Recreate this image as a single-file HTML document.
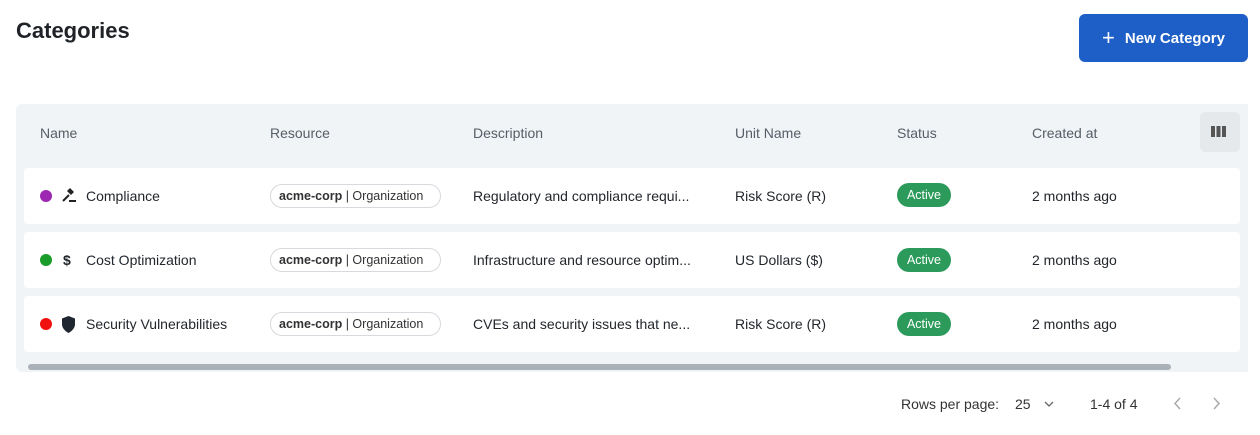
<!DOCTYPE html>
<html><head><style>
*{box-sizing:border-box;margin:0;padding:0}
body{width:1260px;height:435px;background:#fff;font-family:"Liberation Sans",sans-serif;color:#1f2328;position:relative;overflow:hidden}
.abs{position:absolute}
h1{position:absolute;left:16px;top:18px;font-size:22px;font-weight:bold;color:#1f2328}
.btn{left:1079px;top:14px;width:169px;height:48px;background:#1e5fc7;border-radius:6px;color:#fff;font-weight:bold;font-size:15px;display:flex;align-items:center;justify-content:center;gap:10px}
.wrap{left:16px;top:104px;width:1232px;height:268px;background:#f1f4f7;border-radius:6px 0 0 6px}
.th{top:125px;font-size:14px;color:#555d66}
.row{left:24px;width:1216px;height:56px;background:#fff;border-radius:4px}
.t{font-size:14px;color:#22272d}
.dot{width:12px;height:12px;border-radius:50%}
.chip{height:24px;border:1px solid #d6d9dd;border-radius:12px;font-size:12.5px;padding:0 8px;line-height:22px;color:#333;left:270px;width:171px}
.badge{left:897px;width:54px;height:24px;border-radius:12px;background:#2c9a5a;color:#fff;font-size:12.5px;text-align:center;line-height:24px}
.pg{font-size:14px;color:#333;top:396px}
</style></head><body>
<h1>Categories</h1>
<div class="abs btn"><span style="font-size:22px;font-weight:normal;line-height:1">+</span>New Category</div>
<div class="abs wrap"></div>
<div class="abs th" style="left:40px">Name</div>
<div class="abs th" style="left:270px">Resource</div>
<div class="abs th" style="left:473px">Description</div>
<div class="abs th" style="left:735px">Unit Name</div>
<div class="abs th" style="left:897px">Status</div>
<div class="abs th" style="left:1032px">Created at</div>
<div class="abs" style="left:1200px;top:112px;width:40px;height:40px;background:#e6e9ec;border-radius:6px"></div>
<svg class="abs" style="left:1211px;top:126px" width="15" height="11"><rect x="0" y="0" width="4" height="11" fill="#555"/><rect x="5.5" y="0" width="4" height="11" fill="#555"/><rect x="11" y="0" width="4" height="11" fill="#555"/></svg>

<div class="abs row" style="top:168px"></div>
<div class="abs row" style="top:232px"></div>
<div class="abs row" style="top:296px"></div>

<div class="abs dot" style="left:40px;top:190px;background:#9c27b0"></div>
<svg class="abs" style="left:61px;top:187px" width="16" height="16" viewBox="0 0 16 16"><path d="M2 14 L8 8" stroke="#222" stroke-width="2"/><path d="M6 4 L9 1 L13 5 L10 8 Z" fill="#222"/><rect x="8" y="13" width="7" height="2" fill="#222"/></svg>
<div class="abs t" style="left:86px;top:188px">Compliance</div>

<div class="abs dot" style="left:40px;top:254px;background:#1a9c2a"></div>
<div class="abs t" style="left:63px;top:252px;font-weight:bold">$</div>
<div class="abs t" style="left:86px;top:252px">Cost Optimization</div>

<div class="abs dot" style="left:40px;top:318px;background:#f01010"></div>
<svg class="abs" style="left:61px;top:316px" width="15" height="17" viewBox="0 0 15 17"><path d="M7.5 0 L14 2.5 V8 C14 12 11 15 7.5 17 C4 15 1 12 1 8 V2.5 Z" fill="#1f2630"/></svg>
<div class="abs t" style="left:86px;top:316px">Security Vulnerabilities</div>

<div class="abs chip" style="top:184px"><b>acme-corp</b> | Organization</div>
<div class="abs chip" style="top:248px"><b>acme-corp</b> | Organization</div>
<div class="abs chip" style="top:312px"><b>acme-corp</b> | Organization</div>

<div class="abs t" style="left:473px;top:188px">Regulatory and compliance requi...</div>
<div class="abs t" style="left:473px;top:252px">Infrastructure and resource optim...</div>
<div class="abs t" style="left:473px;top:316px">CVEs and security issues that ne...</div>

<div class="abs t" style="left:735px;top:188px">Risk Score (R)</div>
<div class="abs t" style="left:735px;top:252px">US Dollars ($)</div>
<div class="abs t" style="left:735px;top:316px">Risk Score (R)</div>

<div class="abs badge" style="top:183px">Active</div>
<div class="abs badge" style="top:248px">Active</div>
<div class="abs badge" style="top:312px">Active</div>

<div class="abs t" style="left:1032px;top:188px">2 months ago</div>
<div class="abs t" style="left:1032px;top:252px">2 months ago</div>
<div class="abs t" style="left:1032px;top:316px">2 months ago</div>

<div class="abs" style="left:28px;top:364px;width:1143px;height:6px;border-radius:3px;background:#a9b0b7"></div>

<div class="abs pg" style="left:901px">Rows per page:</div>
<div class="abs pg" style="left:1015px">25</div>
<svg class="abs" style="left:1044px;top:401px" width="10" height="6"><path d="M1 1 L5 5 L9 1" stroke="#666" fill="none" stroke-width="1.3"/></svg>
<div class="abs pg" style="left:1090px">1-4 of 4</div>
<svg class="abs" style="left:1173px;top:397px" width="8" height="13"><path d="M7 1 L2 6.5 L7 12" stroke="#aaa" fill="none" stroke-width="1.5"/></svg>
<svg class="abs" style="left:1213px;top:397px" width="8" height="13"><path d="M1 1 L6 6.5 L1 12" stroke="#aaa" fill="none" stroke-width="1.5"/></svg>
</body></html>
